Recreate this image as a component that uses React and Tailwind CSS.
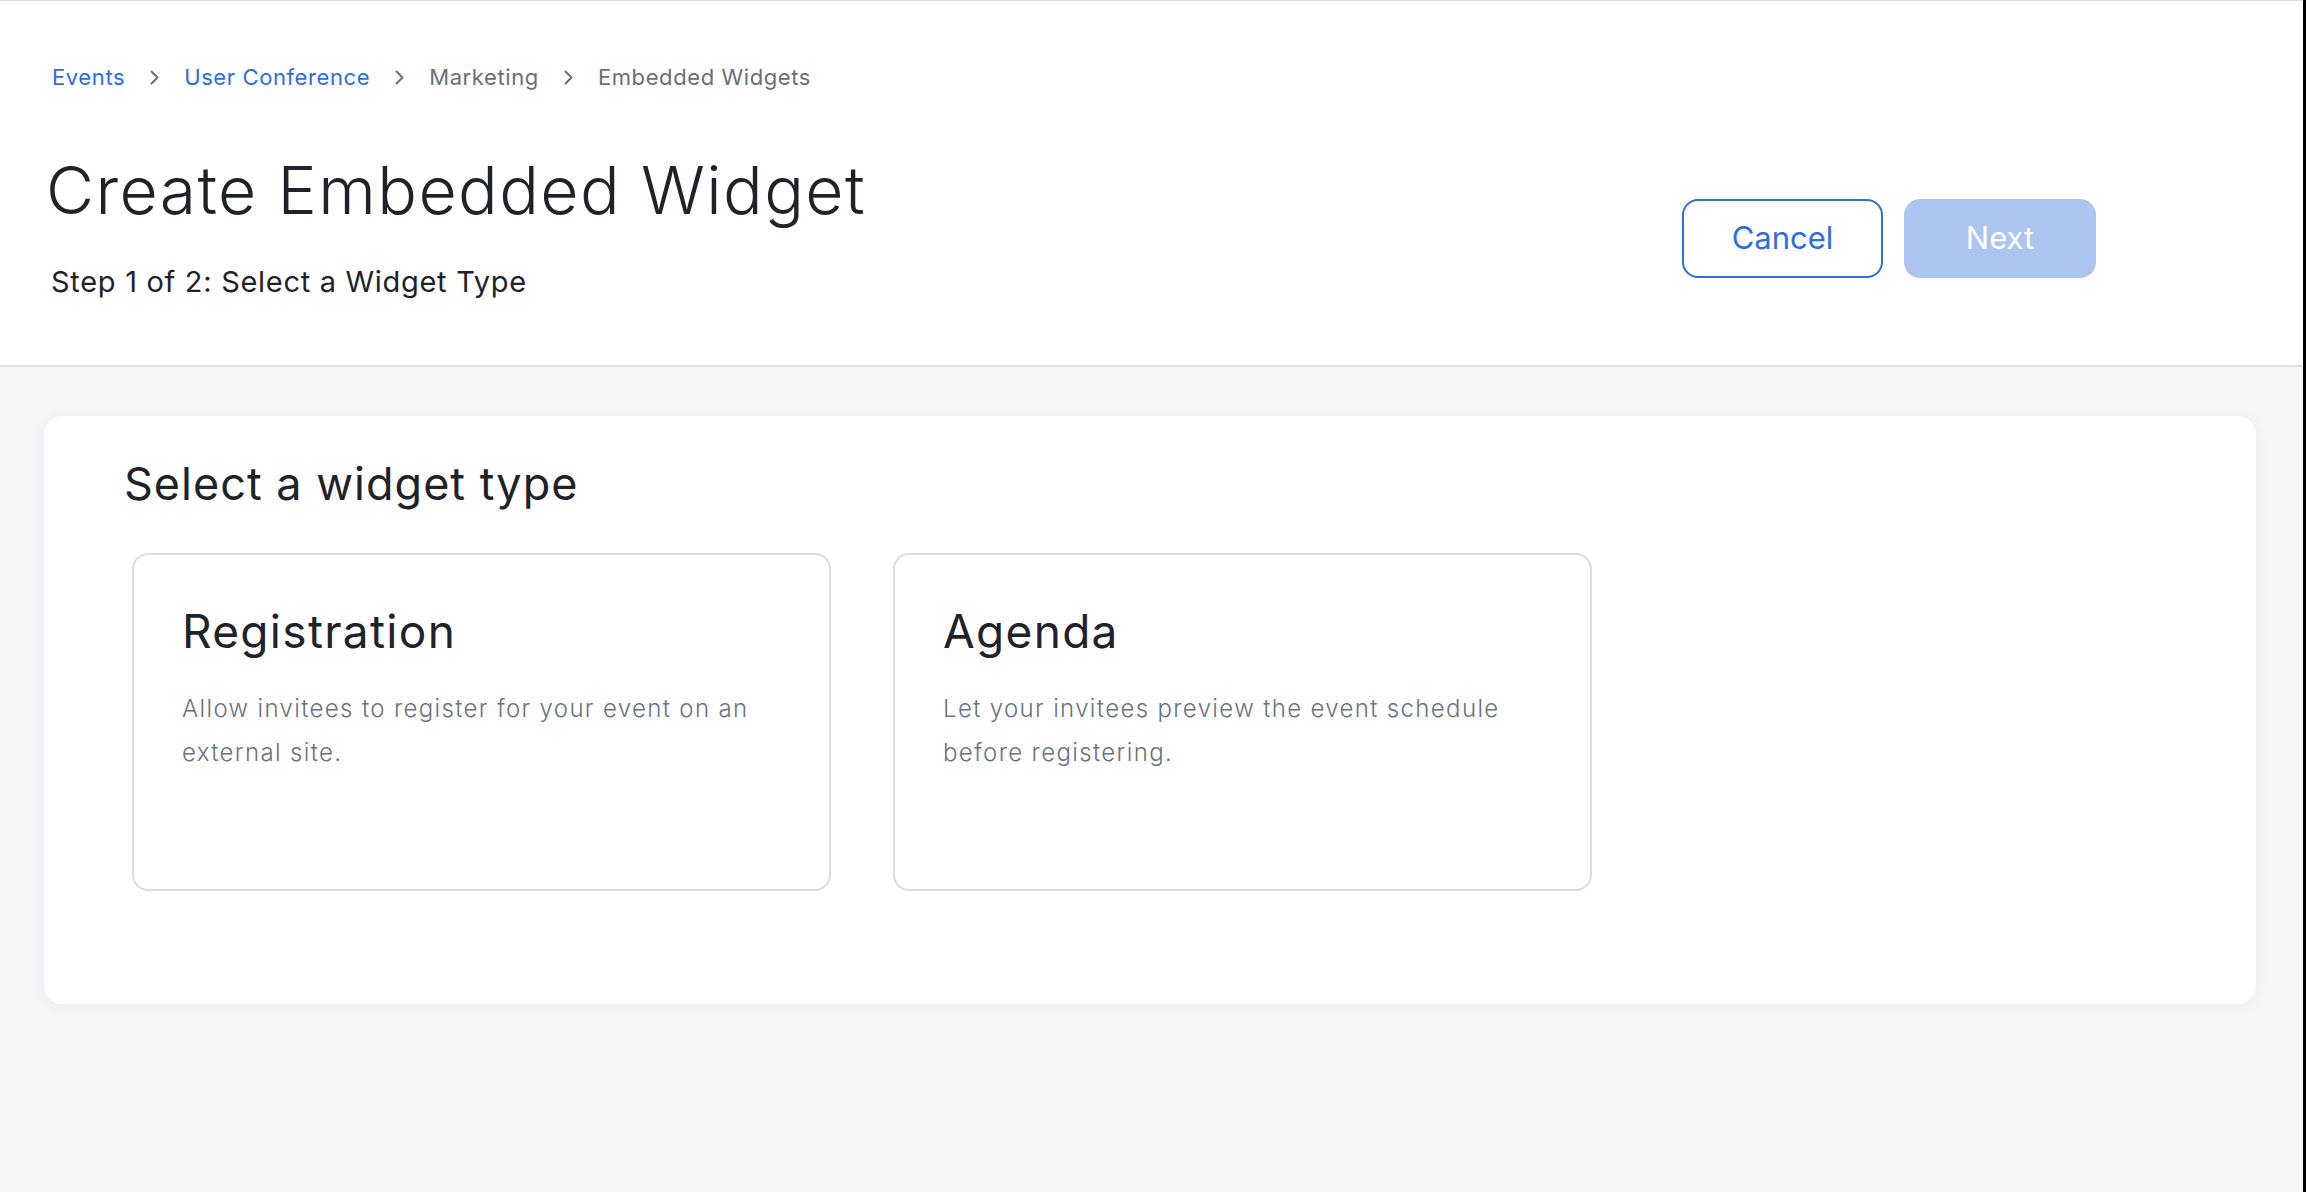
const crumbs = [
  { label: 'Events', link: true },
  { label: 'User Conference', link: true },
  { label: 'Marketing', link: false },
  { label: 'Embedded Widgets', link: false },
];

const widgetTypes = [
  {
    title: 'Registration',
    text: 'Allow invitees to register for your event on an external site.',
  },
  {
    title: 'Agenda',
    text: 'Let your invitees preview the event schedule before registering.',
  },
];

const Chevron = () => (
  <svg width="9" height="15" viewBox="0 0 9 15" fill="none" stroke="#6b6f76" strokeWidth="2" strokeLinecap="round" strokeLinejoin="round">
    <path d="M1.5 1.5l6 6-6 6" />
  </svg>
);

const App = () => {
  return (
    <div className="flex min-h-screen w-full font-['Inter',sans-serif] text-[#1f2329]">
      <div className="flex flex-1 flex-col bg-[#f5f6f8]">
        {/* Header */}
        <header className="border-t border-b-2 border-t-[#dcdcdc] border-b-[#dcdfe3] bg-white pt-[65px] pb-[69px]">
          <nav className="ml-[52px] flex items-center gap-[25px] text-[22px] leading-[22px] tracking-[0.6px]">
            {crumbs.map((c, i) => (
              <div key={c.label} className="flex items-center gap-[25px]">
                <span className={c.link ? 'text-[#2f6ddf]' : 'text-[#6b6f76]'}>{c.label}</span>
                {i < crumbs.length - 1 && <Chevron />}
              </div>
            ))}
          </nav>

          <div className="mt-[69px] flex items-start justify-between pr-[207px]">
            <div>
              <h1 className="ml-[46px] text-[66px] leading-[66px] font-light tracking-[1.4px]">Create Embedded Widget</h1>
              <p className="ml-[51px] mt-[44px] text-[29px] leading-[29px] tracking-[0.7px]">Step 1 of 2: Select a Widget Type</p>
            </div>
            <div className="mt-[42px] flex gap-[21px]">
              <button className="flex h-[79px] w-[201px] items-center justify-center rounded-[16px] border-2 border-[#2f6ddf] bg-white text-[31px] text-[#2f6ddf]">
                Cancel
              </button>
              <button className="flex h-[79px] w-[192px] items-center justify-center rounded-[16px] bg-[#abc4f0] text-[31px] text-white">
                Next
              </button>
            </div>
          </div>
        </header>

        {/* Content */}
        <main className="pt-[49px] pl-[44px] pr-[47px] pb-[120px]">
          <section className="rounded-[18px] bg-white pt-[46px] pl-[80px] pb-[113px] shadow-[0_2px_14px_rgba(20,30,50,0.06)]">
            <h2 className="text-[45px] leading-[44px] tracking-[1px]">Select a widget type</h2>
            <div className="mt-[47px] ml-[8px] flex gap-[62px]">
              {widgetTypes.map((w) => (
                <div key={w.title} className="h-[338px] w-[699px] rounded-[16px] border-2 border-[#dadcdf] bg-white pt-[54px] px-[48px]">
                  <h3 className="text-[46px] leading-[44px] tracking-[1.3px]">{w.title}</h3>
                  <p className="mt-[34px] text-[24px] leading-[44px] font-light tracking-[1.35px] text-[#6b7280]">{w.text}</p>
                </div>
              ))}
            </div>
          </section>
        </main>
      </div>
      <div className="w-[3px] shrink-0 bg-black" />
    </div>
  );
};

export default App;
